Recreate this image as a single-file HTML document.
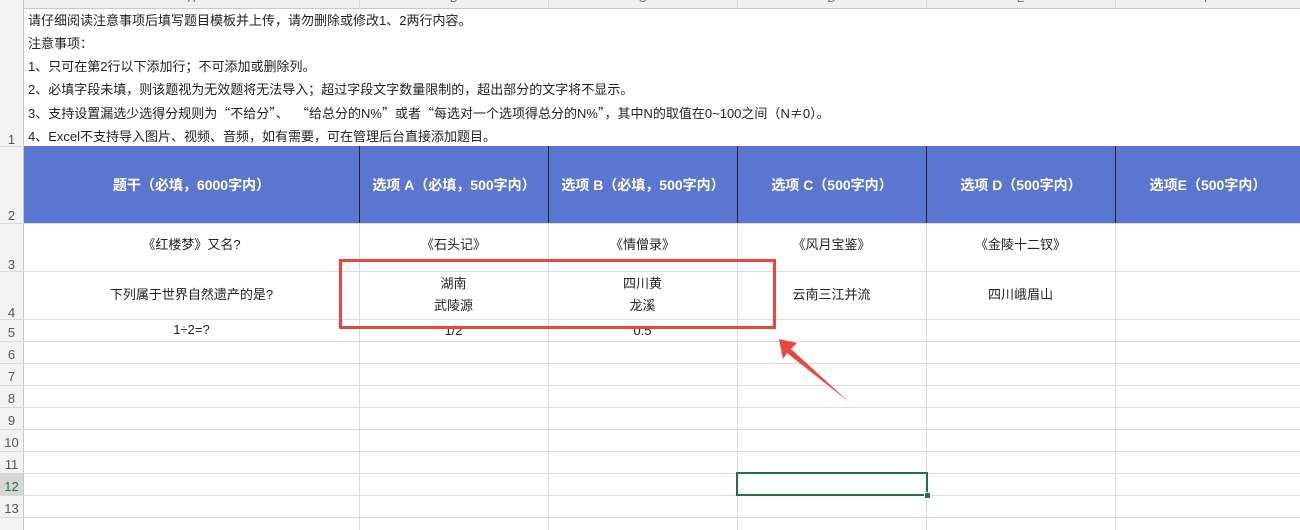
<!DOCTYPE html>
<html><head><meta charset="utf-8"><style>
body{margin:0;width:1300px;height:530px;overflow:hidden;background:#fff;font-family:"Liberation Sans","Noto Sans CJK SC",sans-serif;font-size:13px;color:#222;position:relative}
.a{position:absolute}
.hl{position:absolute;left:0;width:1300px;height:1px;background:#dadada}
.vl{position:absolute;top:0;height:530px;width:1px;background:#dadada}
.rn{position:absolute;left:0;width:23px;text-align:center;color:#555;font-size:13px}
.c{position:absolute;text-align:center;display:flex;align-items:center;justify-content:center;line-height:22px}
.h{color:#fff;font-weight:bold;font-size:14px;background:#5b76d1}
.j{font-family:"Noto Sans CJK SC",sans-serif}
</style></head><body>
<div class="a" style="left:0;top:0;width:1300px;height:8px;background:#eef0f2;border-bottom:1px solid #c8c8c8"></div>
<div class="a" style="left:0;top:0;width:23px;height:530px;background:#f3f3f3;border-right:1px solid #c8c8c8"></div>
<div class="a" style="left:24px;top:146px;width:1276px;height:77px;background:#5b76d1"></div>
<div class="hl" style="top:146px"></div><div class="hl" style="top:223px"></div><div class="hl" style="top:271px"></div><div class="hl" style="top:319px"></div><div class="hl" style="top:341px"></div><div class="hl" style="top:363px"></div><div class="hl" style="top:385px"></div><div class="hl" style="top:407px"></div><div class="hl" style="top:429px"></div><div class="hl" style="top:451px"></div><div class="hl" style="top:473px"></div><div class="hl" style="top:495px"></div><div class="hl" style="top:517px"></div>
<div class="vl" style="left:359px"></div><div class="vl" style="left:548px"></div><div class="vl" style="left:737px"></div><div class="vl" style="left:926px"></div><div class="vl" style="left:1115px"></div>
<div class="a" style="left:359px;top:146px;width:1px;height:77px;background:#222"></div>
<div class="a" style="left:548px;top:146px;width:1px;height:77px;background:#222"></div>
<div class="a" style="left:737px;top:146px;width:1px;height:77px;background:#222"></div>
<div class="a" style="left:926px;top:146px;width:1px;height:77px;background:#222"></div>
<div class="a" style="left:1115px;top:146px;width:1px;height:77px;background:#222"></div>
<div class="a" style="left:24px;top:9px;width:1276px;height:137px;background:#fff"></div>
<div class="a" style="top:-7px;left:24px;width:335px;text-align:center;color:#666;font-size:11px">A</div>
<div class="a" style="top:-7px;left:359px;width:189px;text-align:center;color:#666;font-size:11px">B</div>
<div class="a" style="top:-7px;left:548px;width:189px;text-align:center;color:#666;font-size:11px">C</div>
<div class="a" style="top:-7px;left:737px;width:189px;text-align:center;color:#666;font-size:11px">D</div>
<div class="a" style="top:-7px;left:926px;width:189px;text-align:center;color:#666;font-size:11px">E</div>
<div class="a" style="top:-7px;left:1115px;width:185px;text-align:center;color:#666;font-size:11px">F</div>
<div class="a" style="left:28px;top:9px;line-height:23px;white-space:nowrap">请仔细阅读注意事项后填写题目模板并上传，请勿删除或修改1、2两行内容。<br>注意事项：<br>1、只可在第2行以下添加行；不可添加或删除列。<br>2、必填字段未填，则该题视为无效题将无法导入；超过字段文字数量限制的，超出部分的文字将不显示。<br>3、支持设置漏选少选得分规则为<span class="j">“</span>不给分<span class="j">”</span><span class="j">、</span>&nbsp;&nbsp;<span class="j">“</span>给总分的N%<span class="j">”</span>或者<span class="j">“</span>每选对一个选项得总分的N%<span class="j">”</span>，其中N的取值在0~100之间<span class="j">（</span>N<span class="j">≠</span>0<span class="j">）</span>。<br>4、Excel不支持导入图片、视频、音频，如有需要，可在管理后台直接添加题目。</div>
<div class="rn" style="top:132px">1</div><div class="rn" style="top:208px">2</div><div class="rn" style="top:257px">3</div><div class="rn" style="top:305px">4</div><div class="rn" style="top:325px">5</div><div class="rn" style="top:347px">6</div><div class="rn" style="top:369px">7</div><div class="rn" style="top:391px">8</div><div class="rn" style="top:413px">9</div><div class="rn" style="top:435px">10</div><div class="rn" style="top:457px">11</div><div class="rn" style="top:501px">13</div>
<div class="a" style="left:0;top:473px;width:23px;height:22px;background:#d6d6d6"></div><div class="rn" style="top:479px;color:#217346">12</div>
<div class="c h" style="left:24px;top:146px;width:335px;height:77px">题干（必填，6000字内）</div>
<div class="c h" style="left:360px;top:146px;width:188px;height:77px">选项 A（必填，500字内）</div>
<div class="c h" style="left:549px;top:146px;width:188px;height:77px">选项 B（必填，500字内）</div>
<div class="c h" style="left:738px;top:146px;width:188px;height:77px">选项 C（500字内）</div>
<div class="c h" style="left:927px;top:146px;width:188px;height:77px">选项 D（500字内）</div>
<div class="c h" style="left:1116px;top:146px;width:184px;height:77px">选项E（500字内）</div>
<div class="c" style="left:24px;top:234px;width:335px;height:22px">《红楼梦》又名?</div>
<div class="c" style="left:359px;top:234px;width:189px;height:22px">《石头记》</div>
<div class="c" style="left:548px;top:234px;width:189px;height:22px">《情僧录》</div>
<div class="c" style="left:737px;top:234px;width:189px;height:22px">《风月宝鉴》</div>
<div class="c" style="left:926px;top:234px;width:189px;height:22px">《金陵十二钗》</div>
<div class="c" style="left:24px;top:284px;width:335px;height:22px">下列属于世界自然遗产的是?</div>
<div class="c" style="left:359px;top:273px;width:189px;height:44px">湖南<br>武陵源</div>
<div class="c" style="left:548px;top:273px;width:189px;height:44px">四川黄<br>龙溪</div>
<div class="c" style="left:737px;top:284px;width:189px;height:22px">云南三江并流</div>
<div class="c" style="left:926px;top:284px;width:189px;height:22px">四川峨眉山</div>
<div class="c" style="left:24px;top:319px;width:335px;height:22px;line-height:24px">1÷2=?</div>
<div class="c" style="left:359px;top:319px;width:189px;height:22px;overflow:hidden;align-items:flex-start;line-height:24px">1/2</div>
<div class="c" style="left:548px;top:319px;width:189px;height:22px;overflow:hidden;align-items:flex-start;line-height:24px">0.5</div>
<div class="a" style="left:736px;top:472px;width:188px;height:20px;border:2px solid #217346"></div>
<div class="a" style="left:924px;top:492px;width:5px;height:5px;background:#217346;border:1px solid #fff"></div>
<div class="a" style="left:339px;top:259px;width:431px;height:64px;border:3px solid #e8473f"></div>
<svg class="a" style="left:0;top:0" width="1300" height="530"><polygon points="779,339 797,343 791,349 849,402 787,353 783,359" fill="#e8473f"/></svg>
</body></html>
